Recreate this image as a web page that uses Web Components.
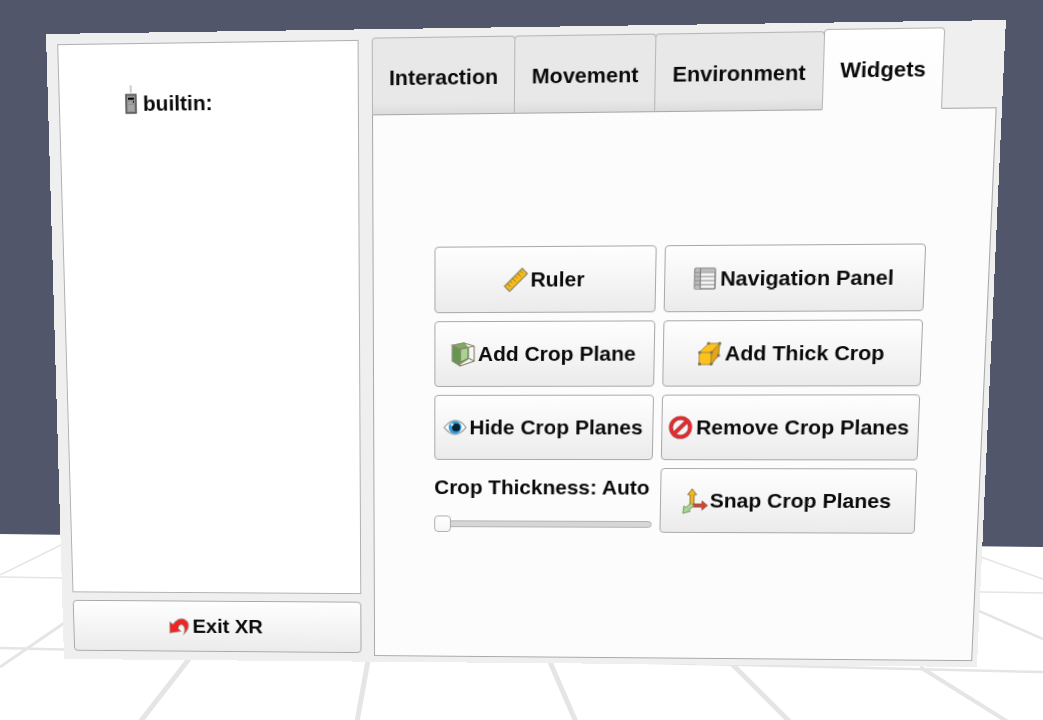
<!DOCTYPE html>
<html lang="en">
<head>
<meta charset="utf-8">
<meta name="viewport" content="width=device-width, initial-scale=1">
<title>XR Control Panel</title>
<style>
  html, body { margin: 0; height: 100%; }
  body { font: bold 21px/24px "Liberation Sans", Arial, sans-serif; color: #0a0a0a; background: #52566b; }
</style>
</head>
<body>
<xr-scene>
  <xr-panel corners="46 34 1006 20 977 667 64 659">
    <device-list slot="side"><device-item>builtin:</device-item></device-list>
    <tool-button slot="side" icon="exit">Exit XR</tool-button>
    <tab-view tabs="Interaction,Movement,Environment,Widgets" selected="3">
      <widget-grid>
        <tool-button icon="ruler">Ruler</tool-button>
        <tool-button icon="panel">Navigation Panel</tool-button>
        <tool-button icon="crop">Add Crop Plane</tool-button>
        <tool-button icon="thick">Add Thick Crop</tool-button>
        <tool-button icon="eye">Hide Crop Planes</tool-button>
        <tool-button icon="remove">Remove Crop Planes</tool-button>
        <thickness-slider></thickness-slider>
        <tool-button icon="snap">Snap Crop Planes</tool-button>
      </widget-grid>
    </tab-view>
  </xr-panel>
</xr-scene>

<script>
const VIEW = { width: 1043, height: 720 };

function define(name, html, setup) {
  const template = document.createElement('template');
  template.innerHTML = html;
  customElements.define(name, class extends HTMLElement {
    connectedCallback() {
      if (this.shadowRoot) return;
      this.attachShadow({ mode: 'open' }).append(template.content.cloneNode(true));
      if (setup) setup(this, this.shadowRoot);
    }
  });
}

const ICONS = {
  exit: `<path d="M1.500 20L1.800 7.500 5.500 10C9 4.500 14.500 2 19 4.500c6 3.500 5 11-1.500 16.500 1.500-4 1.500-8-1-10-2.500-1.500-5 .2-5.500 3.700L14 18z" fill="#ee2328" stroke="#a59083"/>`,
  ruler: `<path d="M1 18.500L18.500 1l5 5.200L6 23.500z" fill="#f6bd16" stroke="#94896a" stroke-width="1.300"/><path d="M4 16l3 3M6.500 13.500l2 2M9 11l3 3M11.500 8.500l2 2M14 6l3 3M16.500 3.500l2 2" stroke="#94701d" fill="none"/>`,
  panel: `<rect x="2" y="2" width="20" height="20" rx="1" fill="#f7f7f7" stroke="#858585" stroke-width="1.500"/><path d="M2.500 2.500h19v3h-19zM2.500 5h5v17h-5z" fill="#bdbdbd"/><path d="M2 6h20M2 10h20M2 14h20M2 18h20M7.500 2v20" stroke="#858585" stroke-width="1.200"/>`,
  crop: `<path d="M1 3l12-3 3 4v14l-6 4L1 19z" fill="#7dac63"/><path d="M1 3l8 4v17L1 19z" fill="#65974e"/><path d="M9 7l8-2v12l-8 3z" fill="#a9d391" stroke="#5f7d4c"/><path d="M1 3l12-2 10 3-14 3zM9 7v17l14-5V4M1 3v16l8 5M17 5v11l6 3M9 21l8-5" fill="none" stroke="#8b8970" stroke-width="1.200"/>`,
  thick: `<path d="M2 11L11 2h11l-1 12-7 9H2z" fill="#f8b812"/><path d="M2 11h12v12H2zM2 11l9-9h11l-8 9 8-9-1 12-7 9" fill="#ffc21d" stroke="#a58a42"/><path d="M14 11l8-9-1 12-7 9z" fill="#e6a514" stroke="#a58a42"/><g fill="#7b7558"><circle cx="2.500" cy="11" r="1.600"/><circle cx="11" cy="2" r="1.600"/><circle cx="22" cy="2" r="1.600"/><circle cx="21" cy="14" r="1.600"/><circle cx="14" cy="11" r="1.600"/><circle cx="14" cy="22.500" r="1.600"/><circle cx="2.500" cy="22.500" r="1.600"/></g>`,
  eye: `<path d="M1 12C6 6 9 5 12 5s7 1 11 7c-4 5-8 7-11 7s-7-2-11-7z" fill="#fff" stroke="#a9a9a9" stroke-width="1.400"/><circle cx="12" cy="12" r="6.500" fill="#3298d8"/><circle cx="13" cy="12" r="4" fill="#082334"/><circle cx="9" cy="9" r="1.500" fill="#c7ebff"/>`,
  remove: `<circle cx="12" cy="12" r="9.500" fill="none" stroke="#963a38" stroke-width="4"/><path d="M18 6L6 18" stroke="#963a38" stroke-width="4"/><circle cx="12" cy="12" r="9.500" fill="none" stroke="#e52b30" stroke-width="3"/><path d="M18.500 5.500l-13 13" stroke="#e52b30" stroke-width="3"/>`,
  snap: `<path d="M7 17V6H4.500L9 0l4.500 6H11v11z" fill="#f1b719" stroke="#8c7c4c"/><path d="M10 15.500h9v-3l5.500 4.500-5.500 4.500v-3h-9z" fill="#dc432f" stroke="#925444"/><path d="M8 14.500l3 3-5 4 1.500 1.500L0 25l1-7.500 2 1.500z" fill="#a8d691" stroke="#7d966c"/>`,
  device: `<path d="M12 0v7" stroke="#999" stroke-width="1"/><path d="M7 9h10v18H7z" fill="#929292" stroke="#555" stroke-width="1.500"/><path d="M9 12h6v2H9z" fill="#050505"/><path d="M9 17h4M9 20h6M9 22h6M9 24h6" stroke="#b9b9b9"/><path d="M14 15h1v2h-1z" fill="#222"/>`
};

define('xr-icon', `
  <style>
    :host { display: block; width: 24px; height: 24px; flex: none; }
    :host([name="exit"]) { width: 22px; height: 22px; }
    :host([name="device"]) { height: 28px; }
    svg { display: block; width: 100%; height: 100%; overflow: visible; }
  </style>
  <svg viewBox="0 0 24 24" aria-hidden="true"></svg>`, (host, root) => {
  const svg = root.querySelector('svg');
  const name = host.getAttribute('name');
  if (!name) return;
  if (name === 'device') svg.setAttribute('viewBox', '0 0 24 28');
  svg.innerHTML = ICONS[name];
});

/* The room: sky, floor with its grid, and the panel hanging in front. */
define('xr-scene', `
  <style>
    :host { display: grid; position: relative; box-sizing: border-box; min-height: 100%; padding: 42px 53px 42px 54px; overflow: hidden; }
    svg { position: absolute; inset: 0; width: 100%; height: 100%; }
  </style>
  <svg viewBox="0 0 1043 720" preserveAspectRatio="none" aria-hidden="true">
    <rect width="1043" height="720" fill="#52566b"/>
    <path d="M0 534L1043 547V720H0z" fill="#fff"/>
    <g stroke="#e5e5e5" fill="none">
      <path d="M0 577L1043 593M0 575L65 543M975 555L1043 579" stroke-width="1.500"/>
      <path d="M970 607L1043 639M0 648L1043 672" stroke-width="2.500"/>
      <path d="M0 667L70 619" stroke-width="3"/>
      <path d="M920 667L1008 722" stroke-width="4"/>
      <path d="M189 659L140 722M369 655L357 722M547 655L576 722M728 660L790 722" stroke-width="5"/>
    </g>
  </svg>
  <slot></slot>`);

/* A flat panel projected onto four corners (clockwise from top left) of the scene. */
define('xr-panel', `
  <style>
    :host { display: grid; grid-template-columns: 301px minmax(0, 1fr); column-gap: 13px; box-sizing: border-box;
      position: relative; padding: 0 5px 0 11px; background: #efefef; transform-origin: 0 0; }
    aside { display: grid; grid-template-rows: 1fr 54px; row-gap: 8px; padding: 10px 0 9px; }
    main { display: grid; padding: 6px 0; }
  </style>
  <aside><slot name="side"></slot></aside>
  <main><slot></slot></main>`, host => {
  const project = () => {
    const scene = host.parentElement;
    const sx = scene.clientWidth / VIEW.width, sy = scene.clientHeight / VIEW.height;
    const p = host.getAttribute('corners').split(' ').map((n, i) =>
      i % 2 ? n * sy - host.offsetTop : n * sx - host.offsetLeft);
    const [x0, y0, x1, y1, x2, y2, x3, y3] = p;
    const dx1 = x1 - x2, dx2 = x3 - x2, dx3 = x0 - x1 + x2 - x3;
    const dy1 = y1 - y2, dy2 = y3 - y2, dy3 = y0 - y1 + y2 - y3;
    const det = dx1 * dy2 - dx2 * dy1;
    const g = (dx3 * dy2 - dx2 * dy3) / det, h = (dx1 * dy3 - dx3 * dy1) / det;
    const w = host.offsetWidth, t = host.offsetHeight;
    host.style.transform = `matrix3d(${[
      (x1 - x0 + g * x1) / w, (y1 - y0 + g * y1) / w, 0, g / w,
      (x3 - x0 + h * x3) / t, (y3 - y0 + h * y3) / t, 0, h / t,
      0, 0, 1, 0, x0, y0, 0, 1].join()})`;
  };
  new ResizeObserver(project).observe(host);
  window.addEventListener('load', project);
  window.addEventListener('resize', project);
});

define('device-list', `
  <style>
    :host { display: block; box-sizing: border-box; padding: 42px 60px; background: #fff; border: 1px solid #b0b0b0; }
  </style>
  <slot></slot>`, host => host.setAttribute('role', 'list'));

define('device-item', `
  <style>
    :host { display: flex; align-items: center; height: 32px; }
    xr-icon { margin-bottom: 8px; }
  </style>
  <xr-icon name="device"></xr-icon><span><slot></slot></span>`, host => host.setAttribute('role', 'listitem'));

define('tool-button', `
  <style>
    :host { display: grid; }
    button { display: flex; align-items: center; justify-content: center; gap: 3px; margin: 0; padding: 0 8px 0 6px;
      font: inherit; color: inherit; white-space: nowrap; border: 1px solid #a8a8a8; border-radius: 4px;
      background: linear-gradient(#fefefe, #fafafa 25%, #ebebeb); }
  </style>
  <button type="button"><xr-icon></xr-icon><span><slot></slot></span></button>`, (host, root) => {
  const icon = document.createElement('xr-icon');
  icon.setAttribute('name', host.getAttribute('icon'));
  root.querySelector('xr-icon').replaceWith(icon);
});

define('tab-view', `
  <style>
    :host { display: grid; grid-template-rows: 77px 1fr; }
    [role=tablist] { display: flex; align-items: stretch; z-index: 1; }
    button { margin: 2px 0 0 -1px; padding: 2px 16px 0; font: inherit; color: inherit; border: 1px solid #b6b6b6;
      border-bottom-color: #a8a8a8; border-radius: 4px 4px 0 0; background: linear-gradient(#e8e8e8 85%, #dcdcdc); }
    button:first-child { margin-left: 0; }
    button[aria-selected=true] { margin-top: 0; padding-top: 0; border-bottom-color: #fcfcfc; background: linear-gradient(#fff, #fcfcfc 80%); }
    [role=tabpanel] { display: grid; place-content: center; margin-top: -1px; border: 1px solid #a8a8a8; background: #fcfcfc; }
  </style>
  <div role="tablist"></div>
  <div role="tabpanel"><slot></slot></div>`, (host, root) => {
  const list = root.querySelector('[role=tablist]');
  host.getAttribute('tabs').split(',').forEach((label, i) => {
    const tab = document.createElement('button');
    tab.type = 'button';
    tab.setAttribute('role', 'tab');
    tab.setAttribute('aria-selected', String(i === Number(host.getAttribute('selected'))));
    tab.textContent = label;
    list.append(tab);
  });
});

define('widget-grid', `
  <style>
    :host { display: grid; grid-template-columns: 220px 254px; grid-auto-rows: 66px; gap: 8px; }
  </style>
  <slot></slot>`);

define('thickness-slider', `
  <style>
    :host { display: grid; grid-template-rows: 40px 18px; row-gap: 8px; }
    label { line-height: 40px; white-space: nowrap; }
    input { appearance: none; width: 100%; height: 18px; margin: 0; background: none; }
    input::-webkit-slider-runnable-track { height: 7px; box-sizing: border-box; border: 1px solid #b2b2b2; border-radius: 4px; background: #d6d6d6; }
    input::-webkit-slider-thumb { appearance: none; box-sizing: border-box; width: 17px; height: 17px; margin: -6px 0 0 -1px;
      border: 1px solid #adadad; border-radius: 4px; background: linear-gradient(#fff, #f6f6f6); }
  </style>
  <label for="thickness">Crop Thickness: Auto</label>
  <input id="thickness" type="range" min="0" max="100" value="0">`);
</script>
</body>
</html>
